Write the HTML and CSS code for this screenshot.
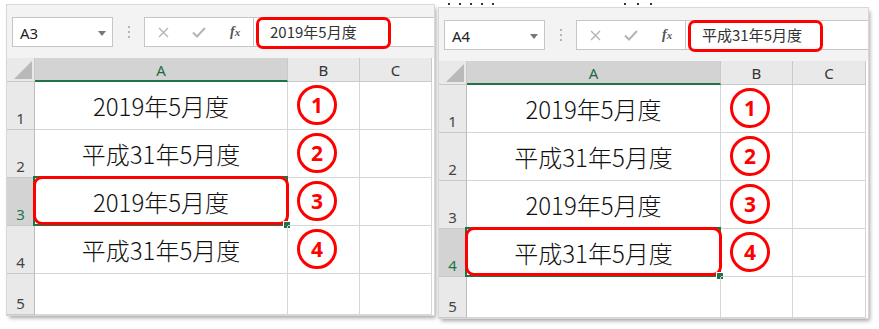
FILE: index.html
```html
<html>
	<head>
		<title>Excel 和暦表示</title>
		<meta charset="utf-8">
		<link rel="stylesheet" href="styles.css">
	</head>
	<body>
		<div class="page">
			<div class="col col-left">
				<div class="sheet">
					<div class="toolbar">
						<div class="namebox">A3<span class="arrow"></span></div>
						<div class="grip"><i></i><i></i><i></i></div>
						<div class="fxbox">
							<span class="btn"><svg width="11" height="11" viewBox="0 0 11 11"><path d="M1 1L10 10M10 1L1 10" stroke="#b4b4b4" stroke-width="1.4" fill="none"/></svg></span>
							<span class="btn"><svg width="14" height="11" viewBox="0 0 14 11"><path d="M1 5.5L5 9.5L13 1" stroke="#b4b4b4" stroke-width="2" fill="none"/></svg></span>
							<span class="btn fx"><i>f</i><i class="sub">x</i></span>
						</div>
						<div class="formula">2019年5月度<span class="mark"></span></div>
					</div>
					<div class="grid">
						<div class="corner"><svg width="18" height="18" viewBox="0 0 18 18"><polygon points="18,0 18,18 0,18" fill="#b9b9b9"/></svg></div>
						<div class="col-head on">A</div>
						<div class="col-head">B</div>
						<div class="col-head">C</div>

						<div class="row-head">1</div>
						<div class="cell">2019年5月度</div>
						<div class="cell cell-b"><span class="num">1</span></div>
						<div class="cell"></div>

						<div class="row-head">2</div>
						<div class="cell">平成31年5月度</div>
						<div class="cell cell-b"><span class="num">2</span></div>
						<div class="cell"></div>

						<div class="row-head on">3</div>
						<div class="cell sel">2019年5月度<span class="mark"></span></div>
						<div class="cell cell-b"><span class="num">3</span></div>
						<div class="cell"></div>

						<div class="row-head">4</div>
						<div class="cell">平成31年5月度</div>
						<div class="cell cell-b"><span class="num">4</span></div>
						<div class="cell"></div>

						<div class="row-head">5</div>
						<div class="cell"></div>
						<div class="cell"></div>
						<div class="cell"></div>
					</div>
				</div>
			</div>

			<div class="col col-right">
				<div class="strip">
					<span class="frag frag-a"><i></i><i></i><i></i><i></i><i></i></span>
					<span class="frag frag-b"><i></i><i></i><i></i></span>
				</div>
				<div class="sheet sheet-wide">
					<div class="toolbar">
						<div class="namebox">A4<span class="arrow"></span></div>
						<div class="grip"><i></i><i></i><i></i></div>
						<div class="fxbox">
							<span class="btn"><svg width="11" height="11" viewBox="0 0 11 11"><path d="M1 1L10 10M10 1L1 10" stroke="#b4b4b4" stroke-width="1.4" fill="none"/></svg></span>
							<span class="btn"><svg width="14" height="11" viewBox="0 0 14 11"><path d="M1 5.5L5 9.5L13 1" stroke="#b4b4b4" stroke-width="2" fill="none"/></svg></span>
							<span class="btn fx"><i>f</i><i class="sub">x</i></span>
						</div>
						<div class="formula">平成31年5月度<span class="mark"></span></div>
					</div>
					<div class="grid">
						<div class="corner"><svg width="18" height="18" viewBox="0 0 18 18"><polygon points="18,0 18,18 0,18" fill="#b9b9b9"/></svg></div>
						<div class="col-head on">A</div>
						<div class="col-head">B</div>
						<div class="col-head">C</div>

						<div class="row-head">1</div>
						<div class="cell">2019年5月度</div>
						<div class="cell cell-b"><span class="num">1</span></div>
						<div class="cell"></div>

						<div class="row-head">2</div>
						<div class="cell">平成31年5月度</div>
						<div class="cell cell-b"><span class="num">2</span></div>
						<div class="cell"></div>

						<div class="row-head">3</div>
						<div class="cell">2019年5月度</div>
						<div class="cell cell-b"><span class="num">3</span></div>
						<div class="cell"></div>

						<div class="row-head on">4</div>
						<div class="cell sel">平成31年5月度<span class="mark"></span></div>
						<div class="cell cell-b"><span class="num">4</span></div>
						<div class="cell"></div>

						<div class="row-head">5</div>
						<div class="cell"></div>
						<div class="cell"></div>
						<div class="cell"></div>
					</div>
				</div>
			</div>
		</div>
	</body>
</html>
```

FILE: styles.css
```css
* {
	box-sizing: border-box;
}
body {
	margin: 0;
	background: #ffffff;
	font-family: "Noto Sans", "Noto Sans CJK JP", sans-serif;
	color: #222222;
}
.page {
	display: flex;
	align-items: flex-start;
	gap: 5px;
	padding-left: 7px;
}
.col-left {
	padding-top: 5px;
}

/* cropped text fragments above the right screenshot */
.strip {
	height: 8px;
	display: flex;
	align-items: flex-start;
	padding-top: 3px;
}
.frag {
	display: flex;
	gap: 8px;
}
.frag i {
	width: 2px;
	height: 2px;
	background: #333333;
}
.frag-a {
	margin-left: 9px;
	gap: 9px;
}
.frag-b {
	margin-left: 130px;
	gap: 11px;
}

.sheet {
	width: 427px;
	height: 310px;
	overflow: hidden;
	background: #ffffff;
	box-shadow: 0 0 0 1px #d8d8d8, 2px 3px 4px rgba(0,0,0,0.35);
}
.sheet-wide {
	width: 429px;
}

/* formula bar */
.toolbar {
	height: 53px;
	padding: 12px 0 0 5px;
	background: #f3f3f3;
	display: flex;
	align-items: flex-start;
}
.namebox {
	width: 101px;
	height: 30px;
	border: 1px solid #c6c6c6;
	background: #ffffff;
	display: flex;
	align-items: center;
	padding: 2px 6px 0 7px;
	font-size: 15px;
	color: #222222;
}
.namebox .arrow {
	margin-left: auto;
	border-left: 4px solid transparent;
	border-right: 4px solid transparent;
	border-top: 5px solid #777777;
}
.grip {
	width: 31px;
	height: 30px;
	display: flex;
	flex-direction: column;
	align-items: center;
	justify-content: center;
	gap: 3px;
}
.grip i {
	width: 2px;
	height: 2px;
	background: #b5b5b5;
}
.fxbox {
	width: 109px;
	height: 30px;
	border: 1px solid #c6c6c6;
	border-right: 0;
	background: #ffffff;
	display: flex;
	align-items: center;
}
.btn {
	width: 36px;
	display: flex;
	justify-content: center;
}
.btn:first-child {
	width: 37px;
}
.fx {
	font-family: "Liberation Serif", serif;
	font-weight: bold;
	color: #555555;
	font-size: 14px;
	align-items: baseline;
}
.fx .sub {
	font-size: 11px;
}
.formula {
	flex: 1;
	height: 30px;
	border: 1px solid #c6c6c6;
	border-right: 0;
	background: #ffffff;
	position: relative;
	padding-left: 16px;
	font-family: "Noto Sans CJK JP", sans-serif;
	font-size: 15px;
	line-height: 28px;
	color: #333333;
}
.formula .mark {
	position: absolute;
	left: 2px;
	top: -1px;
	width: 135px;
	height: 32px;
	border: 3px solid #ff0000;
	border-radius: 7px;
}

/* sheet grid */
.grid {
	display: grid;
	grid-template-columns: 28px 253px 72px 72px;
	grid-template-rows: 24px repeat(4, 48px) 41px;
}
.sheet-wide .grid {
	grid-template-columns: 28px 254px 72px 73px;
}
.corner {
	background: #e9e9e9;
	border-right: 1px solid #c9c9c9;
	border-bottom: 1px solid #c9c9c9;
	display: flex;
	align-items: flex-end;
	justify-content: flex-end;
	padding: 0 2px 2px 0;
}
.col-head {
	background: #e9e9e9;
	border-right: 1px solid #c9c9c9;
	border-bottom: 1px solid #c9c9c9;
	display: flex;
	align-items: center;
	justify-content: center;
	padding-top: 1px;
	font-size: 15px;
	color: #333333;
}
.col-head.on {
	background: #d3d3d3;
	color: #1e6b41;
	border-bottom: 2px solid #217346;
}
.row-head {
	background: #e9e9e9;
	border-right: 1px solid #bdbdbd;
	border-bottom: 1px solid #c9c9c9;
	display: flex;
	align-items: flex-end;
	justify-content: center;
	padding-bottom: 3px;
	font-size: 15px;
	line-height: 15px;
	color: #444444;
}
.row-head.on {
	background: #d3d3d3;
	color: #217346;
}
.cell {
	border-right: 1px solid #d6d6d6;
	border-bottom: 1px solid #d6d6d6;
	display: flex;
	align-items: flex-end;
	justify-content: center;
	padding-bottom: 11px;
	font-family: "Noto Sans CJK JP", sans-serif;
	font-weight: 300;
	font-size: 24px;
	line-height: 24px;
	color: #111111;
	position: relative;
}
.cell-b {
	align-items: center;
	justify-content: flex-start;
	padding: 0 0 1px 9px;
}
.num {
	width: 40px;
	height: 40px;
	border: 3px solid #ff0000;
	border-radius: 50%;
	display: flex;
	align-items: center;
	justify-content: center;
	font-family: "Noto Sans", sans-serif;
	font-weight: bold;
	font-size: 21px;
	line-height: 21px;
	color: #ff0000;
}

/* active cell */
.sel::before {
	content: "";
	position: absolute;
	top: -2px;
	left: -2px;
	right: -1px;
	bottom: -1px;
	border: 2px solid #217346;
}
.sel::after {
	content: "";
	position: absolute;
	right: -4px;
	bottom: -4px;
	width: 6px;
	height: 6px;
	background: #217346;
	border: 1px solid #ffffff;
}
.sel .mark {
	position: absolute;
	top: -2px;
	left: -2px;
	right: -2px;
	bottom: 0;
	border: 3px solid #ff0000;
	border-radius: 9px;
}
```
